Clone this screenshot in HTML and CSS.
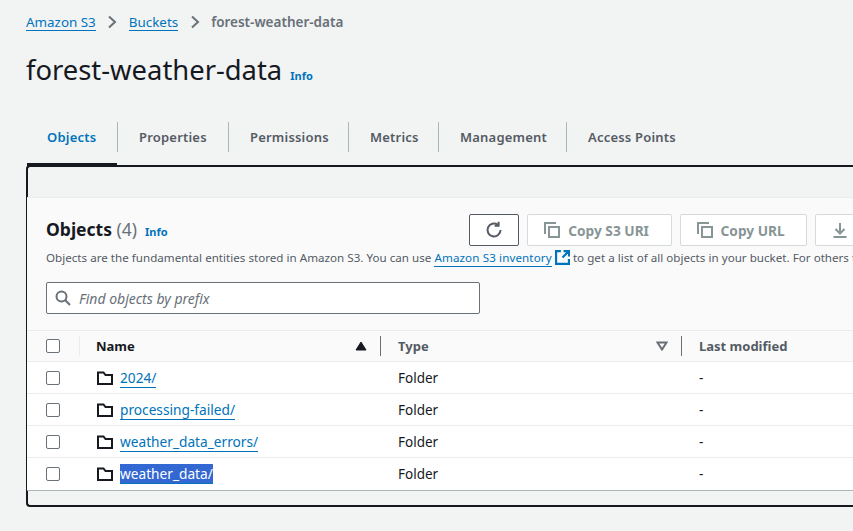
FILE: index.html
```html
<!DOCTYPE html>
<html lang="en">
<head>
  <meta charset="UTF-8">
  <title>forest-weather-data - S3 bucket</title>
  <link rel="stylesheet" href="styles.css">
</head>
<body>
  <div class="page">
    <nav class="crumbs">
      <a class="link" href="#">Amazon S3</a>
      <svg class="crumb-sep" width="10" height="14" viewBox="0 0 10 14"><path d="M2 1.500 8 7l-6 5.500" fill="none" stroke="#687078" stroke-width="2"/></svg>
      <a class="link" href="#">Buckets</a>
      <svg class="crumb-sep" width="10" height="14" viewBox="0 0 10 14"><path d="M2 1.500 8 7l-6 5.500" fill="none" stroke="#687078" stroke-width="2"/></svg>
      <span class="crumb-current">forest-weather-data</span>
    </nav>

    <div class="title-row">
      <h1>forest-weather-data</h1>
      <a class="info" href="#">Info</a>
    </div>

    <div class="tabs">
      <div class="tab active">Objects</div>
      <div class="tab tab-properties">Properties</div>
      <div class="tab tab-permissions">Permissions</div>
      <div class="tab tab-metrics">Metrics</div>
      <div class="tab tab-management">Management</div>
      <div class="tab">Access Points</div>
    </div>

    <div class="panel">
      <div class="panel-top"></div>
      <div class="panel-body">
        <div class="objects-head">
          <div class="head-row">
            <h2>Objects <span class="count">(4)</span></h2>
            <a class="info" href="#">Info</a>
            <div class="actions">
              <button class="btn btn-refresh">
                <svg width="18" height="18" viewBox="0 0 18 18"><path d="M15.500 9A6.500 6.500 0 1 1 12.800 3.700" fill="none" stroke="#545b64" stroke-width="2"/><path d="M13.600 0.800V4.800H9.600" fill="none" stroke="#545b64" stroke-width="2"/></svg>
              </button>
              <button class="btn btn-off btn-uri">
                <svg width="16" height="16" viewBox="0 0 16 16"><path d="M1 12V1h11" fill="none" stroke="#879596" stroke-width="2"/><rect x="5" y="5" width="10" height="10" fill="none" stroke="#879596" stroke-width="2"/></svg>
                Copy S3 URI
              </button>
              <button class="btn btn-off btn-url">
                <svg width="16" height="16" viewBox="0 0 16 16"><path d="M1 12V1h11" fill="none" stroke="#879596" stroke-width="2"/><rect x="5" y="5" width="10" height="10" fill="none" stroke="#879596" stroke-width="2"/></svg>
                Copy URL
              </button>
              <button class="btn btn-down">
                <svg width="16" height="16" viewBox="0 0 16 16"><path d="M8 1v10M3.500 7 8 11.500 12.500 7M1.500 15h13" fill="none" stroke="#879596" stroke-width="2"/></svg>
              </button>
            </div>
          </div>
          <p class="desc">Objects are the fundamental entities stored in Amazon S3. You can use <a class="link" href="#">Amazon S3 inventory</a> <svg class="ext" width="15" height="15" viewBox="0 0 14 14"><path d="M5.500 1H1v12h12V8.500" fill="none" stroke="#0073bb" stroke-width="2"/><path d="M8 1h5v5M13 1 7 7" fill="none" stroke="#0073bb" stroke-width="2"/></svg> to get a list of all objects in your bucket. For others to access your objects, you'll need to explicitly grant them permissions.</p>
          <div class="search">
            <svg width="16" height="16" viewBox="0 0 16 16"><circle cx="6.500" cy="6.500" r="5" fill="none" stroke="#687078" stroke-width="2"/><path d="m10.300 10.300 4.700 4.700" stroke="#687078" stroke-width="2"/></svg>
            <span>Find objects by prefix</span>
          </div>
        </div>

        <div class="row row-head">
          <div class="cell-check"><span class="check"></span></div>
          <div class="cell cell-sel">Name
            <svg class="sort" width="12" height="10" viewBox="0 0 12 10"><path d="M6 1 11 9H1z" fill="#16191f" stroke="#16191f"/></svg>
          </div>
          <div class="cell muted">Type
            <svg class="sort" width="12" height="10" viewBox="0 0 12 10"><path d="M1.500 1.500h9L6 8.500z" fill="none" stroke="#687078" stroke-width="2"/></svg>
          </div>
          <div class="cell muted">Last modified</div>
        </div>

        <div class="row">
          <div class="cell-check"><span class="check"></span></div>
          <div class="cell-name">
            <svg class="folder" width="16" height="14" viewBox="0 0 16 14"><path d="M1 13V1.500h5.500l2 2.500H15v9z" fill="none" stroke="#16191f" stroke-width="2"/></svg>
            <a class="link" href="#">2024/</a>
          </div>
          <div class="cell-plain">Folder</div>
          <div class="cell-plain">-</div>
        </div>
        <div class="row">
          <div class="cell-check"><span class="check"></span></div>
          <div class="cell-name">
            <svg class="folder" width="16" height="14" viewBox="0 0 16 14"><path d="M1 13V1.500h5.500l2 2.500H15v9z" fill="none" stroke="#16191f" stroke-width="2"/></svg>
            <a class="link" href="#">processing-failed/</a>
          </div>
          <div class="cell-plain">Folder</div>
          <div class="cell-plain">-</div>
        </div>
        <div class="row">
          <div class="cell-check"><span class="check"></span></div>
          <div class="cell-name">
            <svg class="folder" width="16" height="14" viewBox="0 0 16 14"><path d="M1 13V1.500h5.500l2 2.500H15v9z" fill="none" stroke="#16191f" stroke-width="2"/></svg>
            <a class="link" href="#">weather_data_errors/</a>
          </div>
          <div class="cell-plain">Folder</div>
          <div class="cell-plain">-</div>
        </div>
        <div class="row row-last">
          <div class="cell-check"><span class="check"></span></div>
          <div class="cell-name">
            <svg class="folder" width="16" height="14" viewBox="0 0 16 14"><path d="M1 13V1.500h5.500l2 2.500H15v9z" fill="none" stroke="#16191f" stroke-width="2"/></svg>
            <a class="link selected" href="#">weather_data/</a>
          </div>
          <div class="cell-plain">Folder</div>
          <div class="cell-plain">-</div>
        </div>
      </div>
    </div>
  </div>
</body>
</html>
```

FILE: styles.css
```css
* { margin: 0; padding: 0; box-sizing: border-box; }
html, body {
  width: 853px;
  height: 531px;
  overflow: hidden;
}
body {
  background: #f2f3f3;
  color: #16191f;
  font-family: "Noto Sans", "Open Sans", sans-serif;
  font-size: 14px;
}
.page {
  padding-left: 26px;
  width: 1000px;
}
.link {
  color: #0073bb;
  text-decoration: none;
  border-bottom: 1px solid #0073bb;
  line-height: 16px;
  display: inline-block;
}
.crumbs {
  height: 44px;
  display: flex;
  align-items: center;
  font-size: 13.400px;
}
.crumb-sep { margin: 0 11.500px; }
.crumb-current {
  color: #687078;
  font-weight: 600;
  font-size: 13.500px;
}
.title-row {
  height: 52px;
  display: flex;
  align-items: center;
  gap: 8px;
}
h1 {
  font-size: 27.400px;
  font-weight: 400;
  margin-top: -1px;
}
.info {
  color: #0073bb;
  font-size: 11px;
  font-weight: 700;
  text-decoration: none;
  margin-top: 10px;
}
.tabs {
  height: 69px;
  padding-top: 26px;
  display: flex;
  align-items: flex-start;
}
.tab {
  height: 30px;
  padding: 0 21px;
  border-right: 1px solid #aab7b8;
  color: #545b64;
  font-size: 13px;
  letter-spacing: 0.200px;
  font-weight: 600;
  line-height: 30px;
  position: relative;
}
.tab:last-child { border-right: none; }
.tab.active {
  color: #0073bb;
  width: 92px;
}
.tab-properties { width: 111px; }
.tab-permissions { width: 120px; }
.tab-metrics { width: 90px; }
.tab-management { width: 128px; }
.tab.active::after {
  content: "";
  position: absolute;
  left: 1px;
  right: 0;
  top: 41px;
  height: 3px;
  background: #16191f;
}
.panel {
  width: 960px;
  height: 342px;
  border: 2px solid #16191f;
  border-right: none;
  border-radius: 4px 0 0 4px;
  background: #f2f3f3;
}
.panel-top { height: 30px; }
.panel-body { margin-left: -1px; }
.objects-head {
  height: 134px;
  padding: 16px 19px 0;
  background: #fafafa;
  border-top: 1px solid #eaeded;
  border-bottom: 1px solid #eaeded;
}
.head-row {
  display: flex;
  align-items: center;
  height: 32px;
}
h2 {
  font-size: 17.500px;
  font-weight: 700;
  margin-right: 8px;
  padding-bottom: 2px;
}
.count {
  color: #687078;
  font-weight: 400;
}
.head-row .info { margin-top: 3px; }
.actions {
  display: flex;
  gap: 8px;
  margin-left: 301px;
}
.btn {
  height: 32px;
  background: #fff;
  border: 1px solid #d5dbdb;
  border-radius: 2px;
  font-family: inherit;
  font-size: 13.700px;
  font-weight: 700;
  color: #879596;
  display: flex;
  align-items: center;
  justify-content: center;
  gap: 8px;
}
.btn-off { padding-right: 5px; }
.btn-refresh {
  width: 50px;
  border-color: #545b64;
}
.btn-uri { width: 145px; }
.btn-url { width: 127px; }
.btn-down {
  width: 120px;
  justify-content: flex-start;
  padding-left: 16px;
}
.desc {
  margin-top: 2px;
  height: 24px;
  line-height: 20px;
  font-size: 11.600px;
  word-spacing: 0.100px;
  color: #545b64;
  white-space: nowrap;
}
.desc .link { letter-spacing: 0.100px; }
.ext { vertical-align: -3px; }
.search {
  margin-top: 10px;
  width: 434px;
  height: 32px;
  background: #fff;
  border: 1px solid #687078;
  border-radius: 2px;
  display: flex;
  align-items: center;
  gap: 8px;
  padding-left: 8px;
  color: #687078;
  font-size: 14px;
  font-style: italic;
}
.row {
  display: grid;
  grid-template-columns: 52px 302px 301px 1fr;
  height: 32px;
  align-items: center;
  background: #fff;
  border-bottom: 1px solid #eaeded;
}
.row-head {
  height: 31px;
  background: #fafafa;
  font-weight: 700;
  font-size: 13px;
}
.row-last {
  height: 33px;
  border-bottom: 1px solid #aab7b8;
}
.cell-check {
  padding-left: 19px;
  display: flex;
  align-items: center;
}
.check {
  width: 14px;
  height: 14px;
  background: #fff;
  border: 1px solid #687078;
  border-radius: 2px;
}
.cell {
  height: 20px;
  line-height: 20px;
  padding: 0 13px 0 17px;
  border-right: 1px solid #687078;
  display: flex;
  align-items: center;
  justify-content: space-between;
}
.cell:last-child { border-right: none; }
.cell-sel { border-left: 1px solid #eaeded; padding-left: 16px; }
.muted { color: #545b64; }
.sort { margin-right: 0; }
.cell-name {
  display: flex;
  align-items: center;
  gap: 7px;
  padding-left: 18px;
}
.cell-name .link {
  font-size: 13.700px;
  line-height: 19px;
}
.folder { flex: none; }
.selected {
  background: #3367d1;
  color: #fff;
}
.cell-plain {
  padding-left: 17px;
  font-size: 13.500px;
}
```
